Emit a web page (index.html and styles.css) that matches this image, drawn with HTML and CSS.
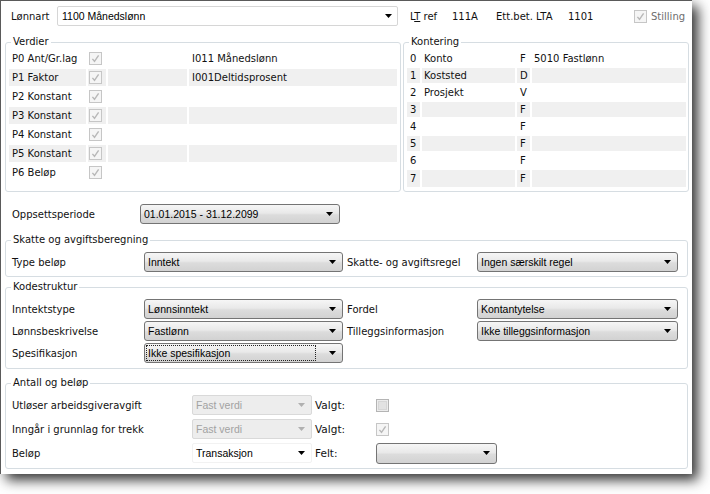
FILE: index.html
```html
<!DOCTYPE html>
<html>
<head>
<meta charset="utf-8">
<link rel="stylesheet" href="styles.css">
</head>
<body>
<div class="dialog">
  <div class="toprow">
    <span class="t-lonnart">Lønnart</span>
    <div class="combo combo-white combo-main"><span class="ctext">1100 Månedslønn</span><svg class="arr" width="7" height="4" viewBox="0 0 7 4"><path d="M0 0H7L3.5 4Z"/></svg></div>
    <span class="t-lt">L<u>T</u> ref</span>
    <span class="t-ltval">111A</span>
    <span class="t-ett">Ett.bet. LTA</span>
    <span class="t-ettval">1101</span>
    <svg class="cb" width="13" height="13" viewBox="0 0 13 13"><rect x="0.5" y="0.5" width="12" height="12" fill="#f5f5f5" stroke="#c6c6c6"/><path d="M3.4 6.9L5.5 9.3L9.6 3.4" fill="none" stroke="#b8b8b8" stroke-width="1.4"/></svg>
    <span class="t-stilling">Stilling</span>
  </div>

  <div class="groups">
    <div class="group verdier">
      <span class="legend">Verdier</span>
      <div class="vrow"><span class="vc vlabel">P0 Ant/Gr.lag</span><span class="vc vchk"><svg class="cb" width="13" height="13" viewBox="0 0 13 13"><rect x="0.5" y="0.5" width="12" height="12" fill="#f5f5f5" stroke="#c6c6c6"/><path d="M3.4 6.9L5.5 9.3L9.6 3.4" fill="none" stroke="#b8b8b8" stroke-width="1.4"/></svg></span><span class="vc vmid"></span><span class="vc vright">I011 Månedslønn</span></div>
      <div class="vrow alt"><span class="vc vlabel">P1 Faktor</span><span class="vc vchk"><svg class="cb" width="13" height="13" viewBox="0 0 13 13"><rect x="0.5" y="0.5" width="12" height="12" fill="#f5f5f5" stroke="#c6c6c6"/><path d="M3.4 6.9L5.5 9.3L9.6 3.4" fill="none" stroke="#b8b8b8" stroke-width="1.4"/></svg></span><span class="vc vmid"></span><span class="vc vright">I001Deltidsprosent</span></div>
      <div class="vrow"><span class="vc vlabel">P2 Konstant</span><span class="vc vchk"><svg class="cb" width="13" height="13" viewBox="0 0 13 13"><rect x="0.5" y="0.5" width="12" height="12" fill="#f5f5f5" stroke="#c6c6c6"/><path d="M3.4 6.9L5.5 9.3L9.6 3.4" fill="none" stroke="#b8b8b8" stroke-width="1.4"/></svg></span><span class="vc vmid"></span><span class="vc vright"></span></div>
      <div class="vrow alt"><span class="vc vlabel">P3 Konstant</span><span class="vc vchk"><svg class="cb" width="13" height="13" viewBox="0 0 13 13"><rect x="0.5" y="0.5" width="12" height="12" fill="#f5f5f5" stroke="#c6c6c6"/><path d="M3.4 6.9L5.5 9.3L9.6 3.4" fill="none" stroke="#b8b8b8" stroke-width="1.4"/></svg></span><span class="vc vmid"></span><span class="vc vright"></span></div>
      <div class="vrow"><span class="vc vlabel">P4 Konstant</span><span class="vc vchk"><svg class="cb" width="13" height="13" viewBox="0 0 13 13"><rect x="0.5" y="0.5" width="12" height="12" fill="#f5f5f5" stroke="#c6c6c6"/><path d="M3.4 6.9L5.5 9.3L9.6 3.4" fill="none" stroke="#b8b8b8" stroke-width="1.4"/></svg></span><span class="vc vmid"></span><span class="vc vright"></span></div>
      <div class="vrow alt"><span class="vc vlabel">P5 Konstant</span><span class="vc vchk"><svg class="cb" width="13" height="13" viewBox="0 0 13 13"><rect x="0.5" y="0.5" width="12" height="12" fill="#f5f5f5" stroke="#c6c6c6"/><path d="M3.4 6.9L5.5 9.3L9.6 3.4" fill="none" stroke="#b8b8b8" stroke-width="1.4"/></svg></span><span class="vc vmid"></span><span class="vc vright"></span></div>
      <div class="vrow"><span class="vc vlabel">P6 Beløp</span><span class="vc vchk"><svg class="cb" width="13" height="13" viewBox="0 0 13 13"><rect x="0.5" y="0.5" width="12" height="12" fill="#f5f5f5" stroke="#c6c6c6"/><path d="M3.4 6.9L5.5 9.3L9.6 3.4" fill="none" stroke="#b8b8b8" stroke-width="1.4"/></svg></span><span class="vc vmid"></span><span class="vc vright"></span></div>
    </div>

    <div class="group kontering">
      <span class="legend">Kontering</span>
      <div class="krow"><span class="kc kn">0</span><span class="kc kname">Konto</span><span class="kc kf">F</span><span class="kc kright">5010 Fastlønn</span></div>
      <div class="krow alt"><span class="kc kn">1</span><span class="kc kname">Koststed</span><span class="kc kf">D</span><span class="kc kright"></span></div>
      <div class="krow"><span class="kc kn">2</span><span class="kc kname">Prosjekt</span><span class="kc kf">V</span><span class="kc kright"></span></div>
      <div class="krow alt"><span class="kc kn">3</span><span class="kc kname"></span><span class="kc kf">F</span><span class="kc kright"></span></div>
      <div class="krow"><span class="kc kn">4</span><span class="kc kname"></span><span class="kc kf">F</span><span class="kc kright"></span></div>
      <div class="krow alt"><span class="kc kn">5</span><span class="kc kname"></span><span class="kc kf">F</span><span class="kc kright"></span></div>
      <div class="krow"><span class="kc kn">6</span><span class="kc kname"></span><span class="kc kf">F</span><span class="kc kright"></span></div>
      <div class="krow alt last"><span class="kc kn">7</span><span class="kc kname"></span><span class="kc kf">F</span><span class="kc kright"></span></div>
    </div>
  </div>

  <div class="oppsett">
    <span class="t-oppsett">Oppsettsperiode</span>
    <div class="combo combo-grad combo-periode"><span class="ctext">01.01.2015 - 31.12.2099</span><svg class="arr" width="7" height="4" viewBox="0 0 7 4"><path d="M0 0H7L3.5 4Z"/></svg></div>
  </div>

  <div class="group skatte">
    <span class="legend">Skatte og avgiftsberegning</span>
    <div class="grid4">
      <span class="lbl">Type beløp</span>
      <div class="combo combo-grad"><span class="ctext">Inntekt</span><svg class="arr" width="7" height="4" viewBox="0 0 7 4"><path d="M0 0H7L3.5 4Z"/></svg></div>
      <span class="lbl lbl2">Skatte- og avgiftsregel</span>
      <div class="combo combo-grad"><span class="ctext">Ingen særskilt regel</span><svg class="arr" width="7" height="4" viewBox="0 0 7 4"><path d="M0 0H7L3.5 4Z"/></svg></div>
    </div>
  </div>

  <div class="group kode">
    <span class="legend">Kodestruktur</span>
    <div class="grid4">
      <span class="lbl">Inntektstype</span>
      <div class="combo combo-grad"><span class="ctext">Lønnsinntekt</span><svg class="arr" width="7" height="4" viewBox="0 0 7 4"><path d="M0 0H7L3.5 4Z"/></svg></div>
      <span class="lbl lbl2">Fordel</span>
      <div class="combo combo-grad"><span class="ctext">Kontantytelse</span><svg class="arr" width="7" height="4" viewBox="0 0 7 4"><path d="M0 0H7L3.5 4Z"/></svg></div>

      <span class="lbl">Lønnsbeskrivelse</span>
      <div class="combo combo-grad"><span class="ctext">Fastlønn</span><svg class="arr" width="7" height="4" viewBox="0 0 7 4"><path d="M0 0H7L3.5 4Z"/></svg></div>
      <span class="lbl lbl2">Tilleggsinformasjon</span>
      <div class="combo combo-grad"><span class="ctext">Ikke tilleggsinformasjon</span><svg class="arr" width="7" height="4" viewBox="0 0 7 4"><path d="M0 0H7L3.5 4Z"/></svg></div>

      <span class="lbl">Spesifikasjon</span>
      <div class="combo combo-grad"><span class="ctext focus">Ikke spesifikasjon</span><svg class="arr" width="7" height="4" viewBox="0 0 7 4"><path d="M0 0H7L3.5 4Z"/></svg></div>
    </div>
  </div>

  <div class="group antall">
    <span class="legend">Antall og beløp</span>
    <div class="grid-antall">
      <span class="lbl">Utløser arbeidsgiveravgift</span>
      <div class="combo combo-dis"><span class="ctext">Fast verdi</span><svg class="arr" width="7" height="4" viewBox="0 0 7 4"><path d="M0 0H7L3.5 4Z"/></svg></div>
      <span class="lbl lbl3">Valgt:</span>
      <svg class="cb" width="13" height="13" viewBox="0 0 13 13"><rect x="0.5" y="0.5" width="12" height="12" fill="#ececec" stroke="#b4b4b4"/><rect x="2.5" y="2.5" width="8" height="8" fill="#e2e2e2" stroke="#d6d6d6"/></svg>

      <span class="lbl">Inngår i grunnlag for trekk</span>
      <div class="combo combo-dis"><span class="ctext">Fast verdi</span><svg class="arr" width="7" height="4" viewBox="0 0 7 4"><path d="M0 0H7L3.5 4Z"/></svg></div>
      <span class="lbl lbl3">Valgt:</span>
      <svg class="cb" width="13" height="13" viewBox="0 0 13 13"><rect x="0.5" y="0.5" width="12" height="12" fill="#f5f5f5" stroke="#c6c6c6"/><path d="M3.4 6.9L5.5 9.3L9.6 3.4" fill="none" stroke="#b8b8b8" stroke-width="1.4"/></svg>

      <span class="lbl">Beløp</span>
      <div class="combo combo-plain"><span class="ctext">Transaksjon</span><svg class="arr" width="7" height="4" viewBox="0 0 7 4"><path d="M0 0H7L3.5 4Z"/></svg></div>
      <span class="lbl lbl3">Felt:</span>
      <div class="combo combo-grad combo-felt"><span class="ctext"></span><svg class="arr" width="7" height="4" viewBox="0 0 7 4"><path d="M0 0H7L3.5 4Z"/></svg></div>
    </div>
  </div>
</div>
</body>
</html>
```

FILE: styles.css
```css
* { box-sizing: border-box; }
html, body { margin: 0; padding: 0; background: #fff; }
body {
  width: 710px;
  height: 494px;
  overflow: hidden;
  font-family: "DejaVu Sans", Verdana, sans-serif;
  font-size: 10px;
  color: #111;
}

.dialog {
  width: 692px;
  height: 474px;
  background: #fff;
  border-top: 1px solid #5a5a5a;
  border-left: 1px solid #5a5a5a;
  box-shadow: 6px 6px 12px rgba(0, 0, 0, 0.8);
  display: flex;
  flex-direction: column;
}

/* top row */
.toprow {
  display: flex;
  align-items: center;
  height: 22px;
  margin-top: 4px;
  white-space: nowrap;
}
.t-lonnart { margin-left: 10px; width: 46px; }
.combo-main { width: 341px; height: 22px; }
.t-lt { margin-left: 12px; width: 42px; }
.t-lt u { text-decoration: underline; text-underline-offset: 1px; }
.t-ltval { width: 44px; }
.t-ett { width: 72px; }
.t-ettval { width: 66px; }
.toprow .cb { margin-right: 4px; }
.t-stilling { color: #6d6d6d; }

/* group boxes */
.group {
  position: relative;
  border: 1px solid #d6dde2;
  border-radius: 3px;
}
.legend {
  position: absolute;
  top: -7px;
  left: 5px;
  padding: 0 2px;
  background: #fff;
  line-height: 12px;
  white-space: nowrap;
}

.groups {
  display: flex;
  gap: 2px;
  margin-top: 15px;
  padding-left: 4px;
  height: 150px;
}
.verdier {
  width: 396px;
  padding: 7px 3px 0 3px;
}
.kontering {
  width: 286px;
  padding: 8px 2px 0 3px;
}

.vrow {
  display: flex;
  gap: 2px;
  height: 17px;
  margin-bottom: 2px;
}
.vc {
  display: flex;
  align-items: center;
  padding-left: 3px;
  white-space: nowrap;
}
.vlabel { width: 77px; }
.vchk { width: 18px; padding-left: 1px; }
.vmid { width: 79px; }
.vright { flex: 1; }
.vrow.alt .vc { background: #f0f0f0; }

.krow {
  display: flex;
  gap: 2px;
  height: 15px;
  margin-bottom: 2px;
}
.krow.last { height: 17px; }
.kc {
  display: flex;
  align-items: center;
  white-space: nowrap;
}
.kn { width: 13px; padding-left: 3px; }
.kname { width: 93px; padding-left: 2px; }
.kf { width: 13px; padding-left: 3px; }
.kright { flex: 1; padding-left: 2px; }
.krow.alt .kc { background: #f0f0f0; }

/* combos */
.combo {
  display: flex;
  align-items: center;
  height: 20px;
  border-radius: 3px;
}
.combo .ctext {
  flex: 1;
  padding-left: 3px;
  font-family: "Liberation Sans", Arial, sans-serif;
  font-size: 10.5px;
  white-space: nowrap;
  overflow: hidden;
  color: #000;
}
.combo .arr {
  flex: none;
  margin-right: 6px;
  fill: #000;
}
.combo-white {
  border: 1px solid #d6d6d6;
  background: #fff;
  border-radius: 2px;
}
.combo-white .ctext { padding-left: 4px; font-size: 10.5px; }
.combo-white .arr { margin-right: 5px; }
.combo-grad {
  border: 1px solid #747474;
  background: linear-gradient(#f6f6f6, #e9e9e9 45%, #dcdcdc 55%, #d2d2d2);
}
.combo-dis {
  border: 1px solid #d9d9d9;
  background: #ededed;
  border-radius: 2px;
}
.combo-dis .ctext { color: #a2a2a2; }
.combo-dis .arr { fill: #b0b0b0; }
.combo-plain {
  border: 1px solid #f2f2f2;
  background: #fff;
  border-radius: 2px;
}
.combo-plain .ctext { font-size: 10.5px; }
.combo .ctext.focus {
  height: 16px;
  line-height: 14px;
  margin: 0 13px 0 1px;
  padding-left: 1px;
  border: 1px dotted #222;
}
.combo .ctext.focus + .arr { margin-right: 6px; }

/* oppsett row */
.oppsett {
  display: flex;
  align-items: center;
  margin-top: 12px;
  height: 20px;
}
.t-oppsett { margin-left: 11px; width: 128px; }
.combo-periode { width: 200px; }

/* grids */
.lbl { white-space: nowrap; }
.lbl2 { padding-left: 4px; }
.lbl3 { padding-left: 3px; }

.skatte {
  margin-top: 16px;
  margin-left: 4px;
  width: 683px;
  height: 37px;
  padding: 11px 0 0 6px;
}
.grid4 {
  display: grid;
  grid-template-columns: 132px 199px 134px 201px;
  grid-auto-rows: 20px;
  row-gap: 2px;
  align-items: center;
}
.kode {
  margin-top: 10px;
  margin-left: 4px;
  width: 683px;
  height: 82px;
  padding: 11px 0 0 6px;
}
.antall {
  margin-top: 14px;
  margin-left: 4px;
  width: 683px;
  height: 86px;
  padding: 11px 0 0 6px;
}
.grid-antall {
  display: grid;
  grid-template-columns: 180px 120px 64px 121px;
  grid-auto-rows: 20px;
  row-gap: 4px;
  align-items: center;
}
.combo-felt { height: 21px; }
.lbl3 { font-size: 10.5px; }
```
